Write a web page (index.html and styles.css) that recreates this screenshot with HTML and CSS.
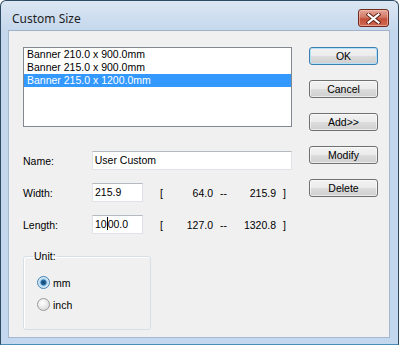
FILE: index.html
```html
<!DOCTYPE html>
<html lang="en">

<head>
  <meta charset="UTF-8">
  <meta name="viewport" content="width=device-width, initial-scale=1.0">
  <title>Custom Size</title>
  <link rel="stylesheet" href="styles.css">
</head>

<body>
  <div class="window">
    <div class="titlebar">
      <span class="title">Custom Size</span>
      <div class="close">
        <svg width="15" height="11" viewBox="0 0 15 11">
          <path d="M2.5 1.5 L12.5 9.5 M12.5 1.5 L2.5 9.5" stroke="#5a1d12" stroke-width="4" stroke-linecap="square" />
          <path d="M2.5 1.5 L12.5 9.5 M12.5 1.5 L2.5 9.5" stroke="#fff" stroke-width="2.2" stroke-linecap="square" />
        </svg>
      </div>
    </div>

    <div class="client">
      <div class="main">
        <div class="listbox">
          <div class="item">Banner 210.0 x 900.0mm</div>
          <div class="item">Banner 215.0 x 900.0mm</div>
          <div class="item selected">Banner 215.0 x 1200.0mm</div>
        </div>

        <div class="fields">
          <div class="row">
            <span class="label">Name:</span>
            <div class="textbox wide">User Custom</div>
          </div>
          <div class="row">
            <span class="label">Width:</span>
            <div class="textbox short">215.9</div>
            <span class="bracket">[</span>
            <span class="num min">64.0</span>
            <span class="dash">--</span>
            <span class="num max">215.9</span>
            <span class="bracket close-b">]</span>
          </div>
          <div class="row">
            <span class="label">Length:</span>
            <div class="textbox short">10<span class="caret"></span>00.0</div>
            <span class="bracket">[</span>
            <span class="num min">127.0</span>
            <span class="dash">--</span>
            <span class="num max">1320.8</span>
            <span class="bracket close-b">]</span>
          </div>
        </div>

        <fieldset class="group">
          <legend>Unit:</legend>
          <label class="radio-row">
            <span class="radio checked"></span>
            <span>mm</span>
          </label>
          <label class="radio-row">
            <span class="radio"></span>
            <span>inch</span>
          </label>
        </fieldset>
      </div>

      <div class="buttons">
        <button class="btn default">OK</button>
        <button class="btn">Cancel</button>
        <button class="btn">Add&gt;&gt;</button>
        <button class="btn">Modify</button>
        <button class="btn">Delete</button>
      </div>
    </div>
  </div>
</body>

</html>
```

FILE: styles.css
```css
* {
  box-sizing: border-box;
}

body {
  margin: 0;
  font-family: "Liberation Sans", Arial, sans-serif;
  font-size: 10.5px;
  color: #000;
}

.window {
  width: 399px;
  height: 345px;
  border: 1px solid #2f4a63;
  border-bottom-color: #4a8db5;
  border-radius: 6px 6px 0 0;
  background: linear-gradient(#dbe6f3, #c4d7ec 30px, #c3d7ee);
  display: flex;
  flex-direction: column;
  overflow: hidden;
}

.titlebar {
  height: 29px;
  display: flex;
  justify-content: space-between;
  align-items: flex-start;
  padding: 0 9px 0 11px;
}

.title {
  font-family: "Noto Sans", sans-serif;
  font-size: 12px;
  line-height: 35px;
  color: #1e1e1e;
}

.close {
  margin-top: 8px;
  width: 31px;
  height: 18px;
  border: 1px solid #6e2a1d;
  border-radius: 3px;
  background: linear-gradient(#e6a597, #d27a66 45%, #c4503a 55%, #cf6a52);
  box-shadow: inset 0 0 0 1px rgba(255, 210, 200, 0.5);
  display: flex;
  align-items: center;
  justify-content: center;
}

.client {
  height: 308px;
  margin: 0 8px 0 7px;
  background: #f0f0f0;
  border: 1px solid #a5b8cf;
  border-top-color: #9fb2c9;
  display: flex;
  gap: 17px;
  padding: 16px 0 0 14px;
}

.main {
  width: 269px;
}

.listbox {
  height: 80px;
  background: #fff;
  border: 1px solid #828790;
}

.item {
  height: 13px;
  line-height: 13px;
  padding-left: 3px;
  white-space: nowrap;
}

.item.selected {
  background: #3399ff;
  color: #fff;
}

.fields {
  margin-top: 24px;
  display: flex;
  flex-direction: column;
  gap: 13px;
}

.row {
  height: 19px;
  display: flex;
  align-items: center;
}

.label {
  width: 69px;
}

.textbox {
  height: 19px;
  line-height: 17px;
  background: #fff;
  border: 1px solid #dfe3e8;
  border-top-color: #b5b9c0;
  padding-left: 2px;
  white-space: nowrap;
}

.textbox.wide {
  width: 201px;
}

.textbox.short {
  width: 51px;
}

.caret {
  display: inline-block;
  width: 1px;
  height: 13px;
  background: #000;
  vertical-align: -2px;
}

.bracket {
  margin-left: 17px;
  width: 8px;
}

.num {
  text-align: right;
}

.num.min {
  width: 45px;
}

.dash {
  margin-left: 7px;
  width: 10px;
}

.num.max {
  width: 46px;
}

.bracket.close-b {
  margin-left: 7px;
}

.group {
  margin: 16px 0 0 0;
  width: 128px;
  border: 1px solid #d5dfe5;
  border-radius: 3px;
  padding: 13px 0 18px 13px;
  box-shadow: inset 1px 1px 0 #fff;
}

.group legend {
  margin-left: -4px;
  padding: 0 1px;
  line-height: 13px;
}

.radio-row {
  height: 13px;
  display: flex;
  align-items: center;
  gap: 3px;
}

.radio-row + .radio-row {
  margin-top: 9px;
}

.radio {
  width: 13px;
  height: 13px;
  border-radius: 50%;
  border: 1px solid #9a9a9a;
  background: radial-gradient(circle at 40% 35%, #fff, #e6e6e6 55%, #c9c9c9);
}

.radio.checked {
  border-color: #3c7fb1;
  background: radial-gradient(circle, #0e3f6a 0, #2b6ca3 2.5px, #a9d2ee 3.5px, #e8f4fc 5.5px);
}

.buttons {
  width: 69px;
  display: flex;
  flex-direction: column;
  gap: 15px;
}

.btn {
  height: 18px;
  padding: 0;
  font-family: "Liberation Sans", Arial, sans-serif;
  font-size: 10.5px;
  color: #000;
  border: 1px solid #707070;
  border-radius: 3px;
  background: linear-gradient(#f2f2f2, #ebebeb 50%, #dddddd 50%, #cfcfcf);
  box-shadow: inset 0 0 0 1px rgba(255, 255, 255, 0.6);
}

.btn.default {
  border-color: #3c7fb1;
  box-shadow: inset 0 0 0 1px #b6e0f7;
}
```
